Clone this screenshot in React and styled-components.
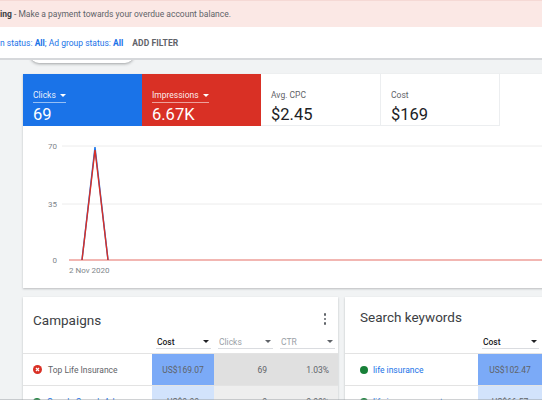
import React from 'react';
import styled, { createGlobalStyle } from 'styled-components';

const Global = createGlobalStyle`
  html, body { margin: 0; padding: 0; }
  body {
    width: 542px; height: 400px; overflow: hidden; background: #f1f3f4;
    font-family: Roboto, "Noto Sans", Arial, sans-serif;
  }
`;

const Page = styled.div`
  position: relative;
  width: 542px;
  height: 400px;
  overflow: hidden;
  background: #f1f3f4;
`;

const Banner = styled.div`
  height: 27px;
  box-sizing: border-box;
  background: #fbe8e5;
  border-top: 1px solid #f5d9d5;
  display: flex;
  align-items: center;
  font-size: 8.5px;
  color: #5f6368;
  white-space: nowrap;
`;

const Strong = styled.b`
  color: #3c4043;
  font-weight: 700;
`;

const FilterBar = styled.div`
  position: relative;
  z-index: 2;
  height: 33px;
  box-sizing: border-box;
  background: #fff;
  border-bottom: 2px solid #d6d8db;
  display: flex;
  align-items: center;
  gap: 9px;
  font-size: 8.5px;
  white-space: nowrap;
`;

const FilterText = styled.span`
  color: #1a73e8;
  b { font-weight: 700; }
`;

const AddFilter = styled.span`
  color: #5f6368;
  font-weight: 700;
  letter-spacing: 0.1px;
`;

const PeekPill = styled.div`
  position: absolute;
  z-index: 1;
  left: 30px;
  top: 44px;
  width: 104px;
  height: 19px;
  border-radius: 9px;
  background: #fff;
  box-shadow: 0 1px 3px rgba(60, 64, 67, 0.45);
`;

const Main = styled.div`
  padding: 14px 0 0 23px;
`;

const ChartCard = styled.div`
  width: 560px;
  background: #fff;
  box-shadow: 0 1px 2px rgba(60, 64, 67, 0.3);
`;

const ScoreRow = styled.div`
  display: flex;
  height: 52px;
`;

const Score = styled.div`
  width: ${p => p.w}px;
  box-sizing: border-box;
  padding: 9px 10px 0 10px;
  background: ${p => p.bg || '#fff'};
  color: ${p => (p.bg ? '#fff' : '#202124')};
  border-right: ${p => (p.bg ? 'none' : '1px solid #eceef0')};
  border-bottom: ${p => (p.bg ? 'none' : '1px solid #eceef0')};
`;

const ScoreLabel = styled.div`
  display: inline-flex;
  align-items: center;
  gap: 4px;
  font-size: 8.5px;
  line-height: 12px;
  padding-bottom: 1px;
  color: ${p => (p.light ? 'rgba(255,255,255,0.92)' : '#5f6368')};
  border-bottom: 1px solid ${p => (p.light ? 'rgba(255,255,255,0.55)' : 'transparent')};
`;

const ScoreValue = styled.div`
  font-size: 16.5px;
  line-height: 22px;
  margin-top: 1px;
`;

const Caret = styled.span`
  display: inline-block;
  width: 0;
  height: 0;
  border-left: 3.5px solid transparent;
  border-right: 3.5px solid transparent;
  border-top: 3.5px solid ${p => p.color || '#fff'};
`;

const ChartArea = styled.div`
  height: 162px;
`;

const Bottom = styled.div`
  display: flex;
  gap: 7px;
  margin-top: 9px;
`;

const Card = styled.div`
  flex: none;
  width: ${p => p.w}px;
  background: #fff;
  box-shadow: 0 1px 2px rgba(60, 64, 67, 0.3);
  height: 120px;
  overflow: hidden;
`;

const TitleRow = styled.div`
  height: 38px;
  box-sizing: border-box;
  padding: ${p => p.pt}px 8px 0 ${p => p.px}px;
  display: flex;
  justify-content: space-between;
  align-items: flex-start;
`;

const Title = styled.div`
  font-size: 13.5px;
  line-height: 18px;
  color: #3c4043;
`;

const Dots = styled.div`
  display: flex;
  flex-direction: column;
  gap: 2px;
  margin-top: ${p => p.mt}px;
  margin-right: 4px;
  span {
    width: 2.5px;
    height: 2.5px;
    border-radius: 50%;
    background: #5f6368;
  }
`;

const Grid = styled.div`
  display: grid;
  grid-template-columns: ${p => p.cols};
`;

const HeadRow = styled(Grid)`
  height: 18px;
  border-bottom: 1px solid #e3e3e3;
`;

const HeadCell = styled.div`
  margin: 0 3px 0 4px;
  height: 14px;
  box-sizing: border-box;
  padding: 0 2px 0 1px;
  border-bottom: 1px solid #dadce0;
  display: flex;
  justify-content: space-between;
  align-items: center;
  font-size: 8.5px;
  color: ${p => (p.active ? '#202124' : '#9aa0a6')};
  font-weight: ${p => (p.active ? 500 : 400)};
`;

const Row = styled(Grid)`
  height: 31px;
  border-bottom: 1px solid #e3e3e3;
`;

const NameCell = styled.div`
  display: flex;
  align-items: center;
  gap: ${p => p.gap}px;
  padding-left: ${p => p.pl}px;
  font-size: 8.5px;
  color: ${p => (p.link ? '#1a73e8' : '#5f6368')};
  white-space: nowrap;
  overflow: hidden;
`;

const Cell = styled.div`
  display: flex;
  align-items: center;
  justify-content: ${p => p.align || 'flex-end'};
  padding: 0 ${p => (p.align ? 0 : 9)}px 0 0;
  background: ${p => p.bg || 'transparent'};
  font-size: 8.5px;
  color: #5f6368;
`;

const Dot = styled.span`
  width: 8px;
  height: 8px;
  border-radius: 50%;
  background: #188038;
  flex: none;
`;

const BottomEdge = styled.div`
  position: absolute;
  left: 0;
  right: 0;
  bottom: 0;
  height: 1px;
  background: rgba(150, 155, 160, 0.45);
`;

function ErrorIcon() {
  return (
    <svg width="9" height="9" viewBox="0 0 10 10" style={{ flex: 'none' }}>
      <circle cx="5" cy="5" r="5" fill="#d93025" />
      <path d="M3.3 3.3 L6.7 6.7 M6.7 3.3 L3.3 6.7" stroke="#fff" strokeWidth="1.3" />
    </svg>
  );
}

function Chart() {
  const baseY = 134;
  const gridYs = [20, 78, 134];
  const labels = ['70', '35', '0'];
  return (
    <svg width="560" height="162" style={{ display: 'block' }}>
      {gridYs.map((y, i) => (
        <g key={i}>
          {i < 2 && <line x1="39" x2="560" y1={y} y2={y} stroke="#ececec" strokeWidth="1" />}
          <text x="34" y={y + 3} textAnchor="end" fontSize="8" fill="#80868b" fontFamily="Roboto, sans-serif">
            {labels[i]}
          </text>
        </g>
      ))}
      <line x1="46" x2="560" y1={baseY} y2={baseY} stroke="#ee9e98" strokeWidth="1.6" />
      <polyline
        points={`59,${baseY} 72,21 85,${baseY}`}
        fill="none" stroke="#1a73e8" strokeWidth="1.4" />
      <polyline
        points={`59,${baseY} 72,24 85,${baseY}`}
        fill="none" stroke="#d93025" strokeWidth="1.4" />
      <text x="46" y="147" fontSize="8" fill="#80868b" fontFamily="Roboto, sans-serif">2 Nov 2020</text>
    </svg>
  );
}

const campCols = '129px 62px 62px 62px';
const kwCols = '133px 64px';

export default function App() {
  return (
    <Page>
      <Global />
      <Banner>
        <Strong>ing</Strong>&nbsp;- Make a payment towards your overdue account balance.
      </Banner>
      <FilterBar>
        <FilterText>n status: <b>All</b>; Ad group status: <b>All</b></FilterText>
        <AddFilter>ADD FILTER</AddFilter>
      </FilterBar>
      <PeekPill />
      <Main>
        <ChartCard>
          <ScoreRow>
            <Score w={119} bg="#1a73e8">
              <ScoreLabel light>Clicks <Caret /></ScoreLabel>
              <ScoreValue>69</ScoreValue>
            </Score>
            <Score w={119} bg="#d93025">
              <ScoreLabel light>Impressions <Caret /></ScoreLabel>
              <ScoreValue>6.67K</ScoreValue>
            </Score>
            <Score w={120}>
              <ScoreLabel>Avg. CPC</ScoreLabel>
              <ScoreValue>$2.45</ScoreValue>
            </Score>
            <Score w={119}>
              <ScoreLabel>Cost</ScoreLabel>
              <ScoreValue>$169</ScoreValue>
            </Score>
          </ScoreRow>
          <ChartArea>
            <Chart />
          </ChartArea>
        </ChartCard>
        <Bottom>
          <Card w={315}>
            <TitleRow pt={14} px={10}>
              <Title>Campaigns</Title>
              <Dots mt={2}><span /><span /><span /></Dots>
            </TitleRow>
            <HeadRow cols={campCols}>
              <div />
              <HeadCell active>Cost <Caret color="#202124" /></HeadCell>
              <HeadCell>Clicks <Caret color="#5f6368" /></HeadCell>
              <HeadCell>CTR <Caret color="#5f6368" /></HeadCell>
            </HeadRow>
            <Row cols={campCols}>
              <NameCell pl={10} gap={6}><ErrorIcon />Top Life Insurance</NameCell>
              <Cell bg="#7baaf7" align="center">US$169.07</Cell>
              <Cell bg="#e0e0e0">69</Cell>
              <Cell bg="#e0e0e0">1.03%</Cell>
            </Row>
            <Row cols={campCols}>
              <NameCell pl={10} gap={6} link><Dot />Google Search Ads</NameCell>
              <Cell bg="#d2e3fc" align="center">US$0.00</Cell>
              <Cell bg="#eeeeee">0</Cell>
              <Cell bg="#eeeeee">0.00%</Cell>
            </Row>
          </Card>
          <Card w={220}>
            <TitleRow pt={11} px={15}>
              <Title>Search keywords</Title>
            </TitleRow>
            <HeadRow cols={kwCols}>
              <div />
              <HeadCell active>Cost <Caret color="#202124" /></HeadCell>
            </HeadRow>
            <Row cols={kwCols}>
              <NameCell pl={15} gap={5} link><Dot />life insurance</NameCell>
              <Cell bg="#7baaf7" align="center">US$102.47</Cell>
            </Row>
            <Row cols={kwCols}>
              <NameCell pl={15} gap={5} link><Dot />life insurance quotes</NameCell>
              <Cell bg="#d2e3fc" align="center">US$66.57</Cell>
            </Row>
          </Card>
        </Bottom>
      </Main>
      <BottomEdge />
    </Page>
  );
}
